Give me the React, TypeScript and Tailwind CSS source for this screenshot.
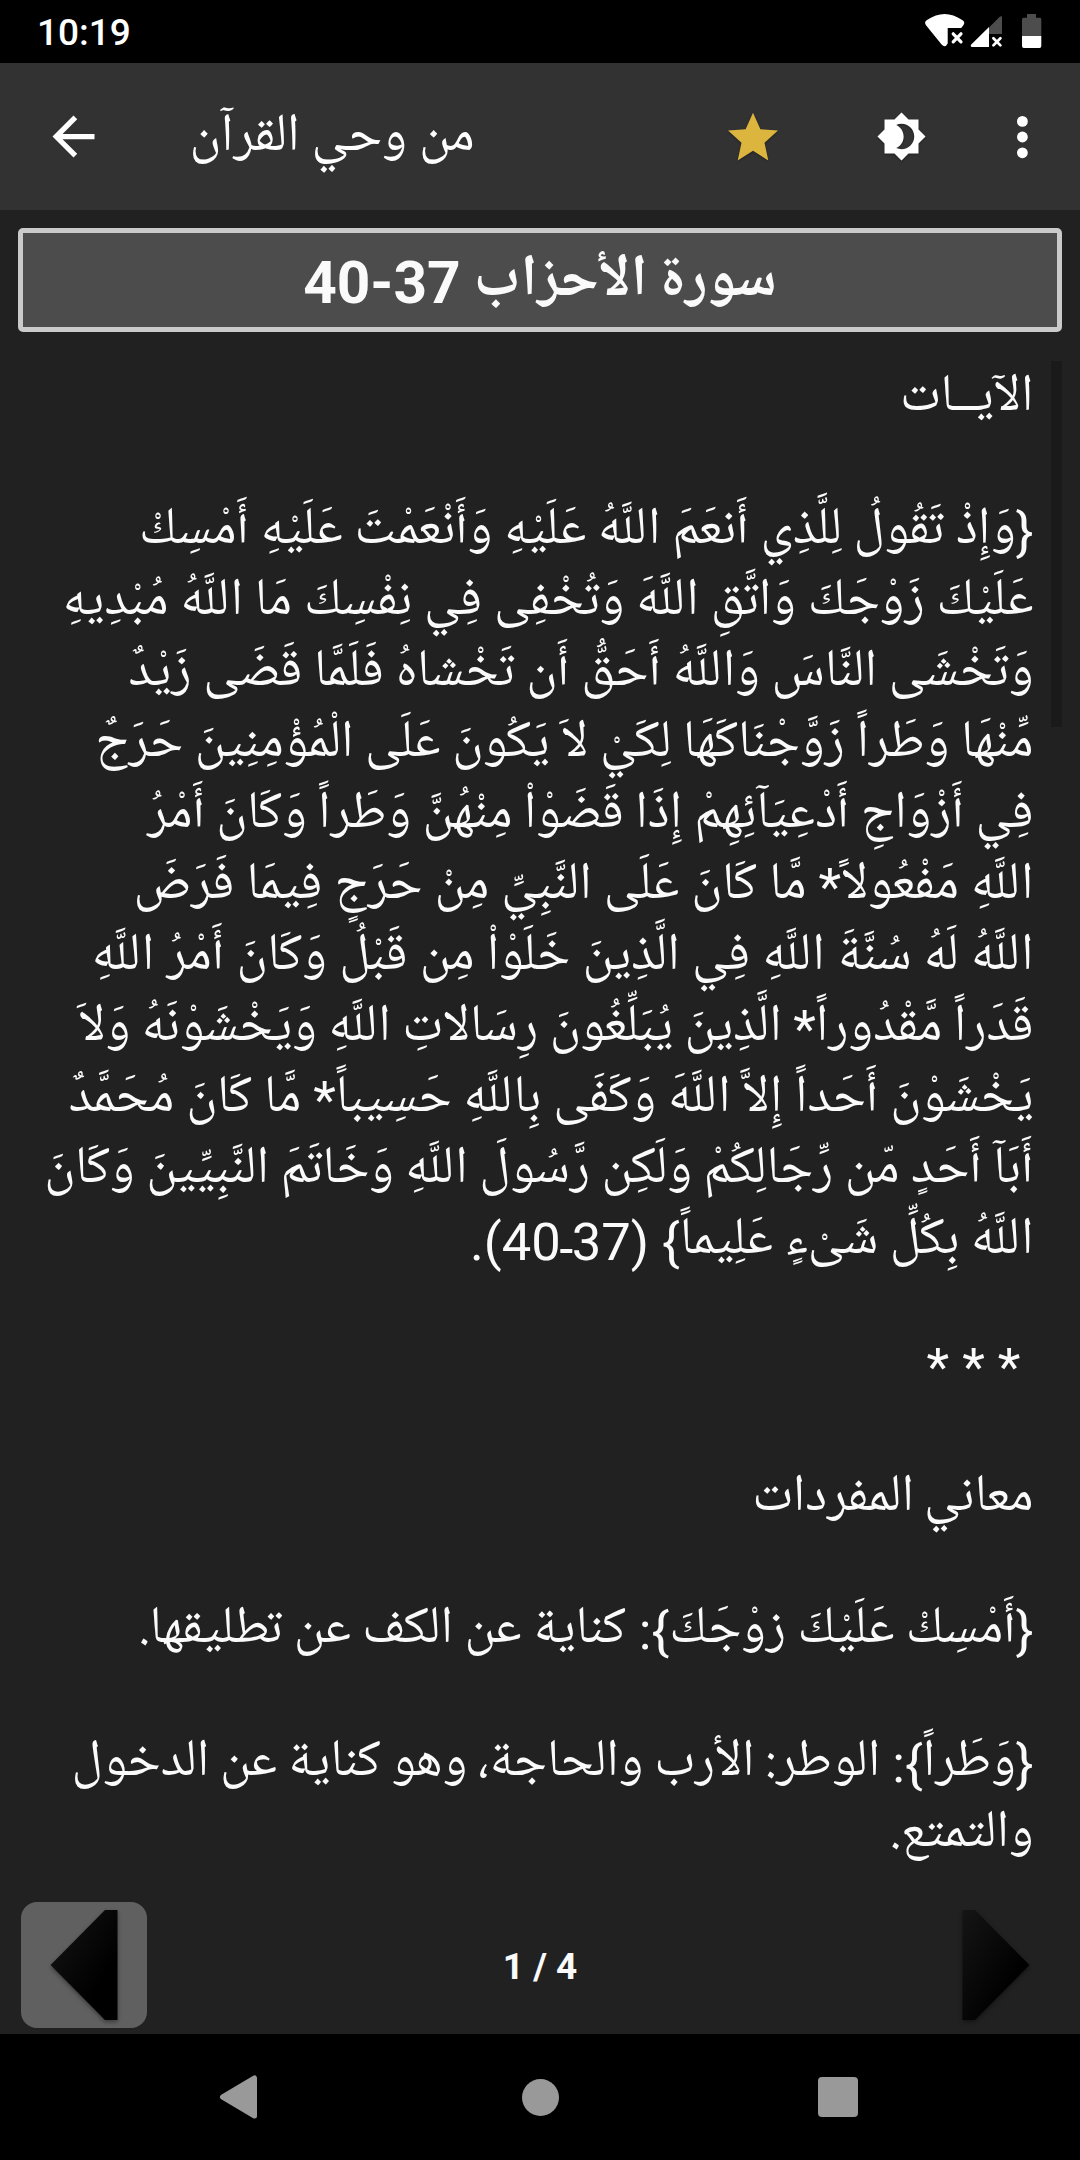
import type { ReactNode } from 'react';

const R = ({ children }: { children: ReactNode }) => (
  <span className="font-['Roboto']">{children}</span>
);

const Line = ({ children, space = 0 }: { children: ReactNode; space?: number }) => (
  <div className="h-[71px] whitespace-nowrap leading-[71px]" style={{ wordSpacing: `${space}px` }}>
    {children}
  </div>
);

const Blank = () => <div className="h-[61.5px]" />;

function StatusBar() {
  return (
    <div className="flex h-[63px] items-start justify-between bg-black pl-[37px] pr-[38px] text-white">
      <span className="pt-[11px] font-['Roboto'] text-[37px] font-medium leading-[43px]">10:19</span>
      <svg className="mt-[10px] h-[40px] w-[120px]" viewBox="922 10 120 40">
        <path d="M926.2 25.5Q923.6 22 927 20Q944.6 8 962.2 20Q965.8 22 963.2 25.5L961.2 28H947.7V43.5Q945 48.6 941.6 44.5Z" fill="#fff" />
        <path d="M953.2 33.8L961 41.8M961 33.8L953.2 41.8" stroke="#fff" strokeWidth="3.2" strokeLinecap="round" />
        <path d="M989 27.5L1000 16.6Q1002 15.6 1002 17.5V34H989Z" fill="#4d4d4d" />
        <path d="M989 27V47H971.6Q970 46.2 971 44.8Z" fill="#fff" />
        <path d="M993.4 38.2L1000.4 45.4M1000.4 38.2L993.4 45.4" stroke="#fff" strokeWidth="2.7" strokeLinecap="round" />
        <path d="M1027 14H1036V17.8H1040Q1041.3 17.8 1041.3 19.5V36H1022V19.5Q1022 17.8 1023.5 17.8H1027Z" fill="#4d4d4d" />
        <path d="M1022 36H1041.3V46Q1041.3 48 1039.5 48H1023.8Q1022 48 1022 46Z" fill="#fff" />
      </svg>
    </div>
  );
}

function Toolbar() {
  return (
    <div className="flex h-[147px] items-center bg-[#323232]">
      <svg className="ml-[42px] h-[63px] w-[63px]" viewBox="0 0 24 24" fill="#fff">
        <path d="M20 11H7.83l5.59-5.59L12 4l-8 8 8 8 1.41-1.41L7.83 13H20v-2z" />
      </svg>
      <div dir="rtl" className="-mt-px ml-[84.5px] w-[285px] whitespace-nowrap text-right text-[53.4px] leading-[71px] text-white">
        من وحي القرآن
      </div>
      <svg className="ml-auto h-[60px] w-[60px] drop-shadow-[0_1px_1px_rgba(0,0,0,0.35)]" viewBox="723 106.5 60 60">
        <path d="M753 112.3L760.4 128.7L778 130L764.5 142.3L768.3 160L753 150.3L737.7 160L741.5 142.3L728 130L745.6 128.7Z" fill="#dcb53f" />
      </svg>
      <svg className="ml-[93px] h-[51px] w-[51px] drop-shadow-[0_1px_1px_rgba(0,0,0,0.35)]" viewBox="0 0 24 24" fill="#fff">
        <path d="M20 8.69V4h-4.69L12 .69 8.69 4H4v4.69L.69 12 4 15.31V20h4.69L12 23.31 15.31 20H20v-4.69L23.31 12 20 8.69zM12 18c-.89 0-1.74-.2-2.5-.55C11.56 16.5 13 14.42 13 12s-1.44-4.5-3.5-5.45C10.26 6.2 11.11 6 12 6c3.31 0 6 2.69 6 6s-2.69 6-6 6z" />
      </svg>
      <svg className="ml-[86px] mr-[47px] h-[44px] w-[20px]" viewBox="0 0 20 44" fill="#fff">
        <circle cx="9.4" cy="6.4" r="5.4" />
        <circle cx="9.4" cy="22" r="5.4" />
        <circle cx="9.4" cy="37.8" r="5.4" />
      </svg>
    </div>
  );
}

function Article() {
  return (
    <div dir="rtl" className="flex h-[1541px] text-[52.5px]">
      <div className="ml-[3px] mr-[18px] h-[366px] w-[11px] shrink-0 bg-[#1a1a1a]" />
      <div className="mr-[14.5px] flex-1">
        <Line>الآيــات</Line>
        <Blank />
        <Line space={0.2}><R>{'{'}</R>وَإِذْ تَقُولُ لِلَّذِي أَنعَمَ اللَّهُ عَلَيْهِ وَأَنْعَمْتَ عَلَيْهِ أَمْسِكْ</Line>
        <Line space={0.3}>عَلَيْكَ زَوْجَكَ وَاتَّقِ اللَّهَ وَتُخْفِى فِي نِفْسِكَ مَا اللَّهُ مُبْدِيهِ</Line>
        <Line space={0.15}>وَتَخْشَى النَّاسَ وَاللَّهُ أَحَقُّ أَن تَخْشاهُ فَلَمَّا قَضَى زَيْدٌ</Line>
        <Line>مِّنْهَا وَطَراً زَوَّجْنَاكَهَا لِكَيْ لاَ يَكُونَ عَلَى الْمُؤْمِنِينَ حَرَجٌ</Line>
        <Line space={-0.2}>فِي أَزْوَاجِ أَدْعِيَآئِهِمْ إِذَا قَضَوْاْ مِنْهُنَّ وَطَراً وَكَانَ أَمْرُ</Line>
        <Line space={0.5}>اللَّهِ مَفْعُولاً<R>*</R> مَّا كَانَ عَلَى النَّبِيِّ مِنْ حَرَجٍ فِيمَا فَرَضَ</Line>
        <Line space={0.7}>اللَّهُ لَهُ سُنَّةَ اللَّهِ فِي الَّذِينَ خَلَوْاْ مِن قَبْلُ وَكَانَ أَمْرُ اللَّهِ</Line>
        <Line space={-0.1}>قَدَراً مَّقْدُوراً<R>*</R> الَّذِينَ يُبَلِّغُونَ رِسَالاتِ اللَّهِ وَيَخْشَوْنَهُ وَلاَ</Line>
        <Line space={0.4}>يَخْشَوْنَ أَحَداً إِلاَّ اللَّهَ وَكَفَى بِاللَّهِ حَسِيباً<R>*</R> مَّا كَانَ مُحَمَّدٌ</Line>
        <Line space={-0.1}>أَبَآ أَحَدٍ مّن رِّجَالِكُمْ وَلَكِن رَّسُولَ اللَّهِ وَخَاتَمَ النَّبِيِّينَ وَكَانَ</Line>
        <Line>اللَّهُ بِكُلِّ شَىْءٍ عَلِيماً<R>{'} (37'}</R>ـ<R>40).</R></Line>
        <div className="h-[62.5px]" />
        <div className="h-[61.5px] whitespace-pre font-['Roboto'] leading-[61.5px]"> * * *</div>
        <div className="h-[62px]" />
        <Line space={-1.5}>معاني المفردات</Line>
        <Blank />
        <Line space={-0.2}><R>{'{'}</R>أَمْسِكْ عَلَيْكَ زوْجَكَ<R>{'}: '}</R>كناية عن الكف عن تطليقها.</Line>
        <Blank />
        <Line space={-0.9}><R>{'{'}</R>وَطَراً<R>{'}: '}</R>الوطر: الأرب والحاجة، وهو كناية عن الدخول</Line>
        <Line>والتمتع.</Line>
      </div>
    </div>
  );
}

function Pager() {
  return (
    <div className="flex h-[132px] items-start justify-between px-[21px]">
      <div className="h-[126px] w-[126px] rounded-[16px] bg-[#606060]">
        <svg className="h-[126px] w-[126px] drop-shadow-[0_2px_2px_rgba(0,0,0,0.4)]" viewBox="0 0 126 126">
          <defs>
            <linearGradient id="prev" x1="0" y1="0" x2="1" y2="1">
              <stop offset="0" stopColor="#151515" />
              <stop offset="0.7" stopColor="#000" />
            </linearGradient>
          </defs>
          <path d="M29.6 63L84 8H96.5V118H84Z" fill="url(#prev)" />
        </svg>
      </div>
      <span className="mt-[43px] font-['Roboto'] text-[37px] font-bold leading-[43px]">1 / 4</span>
      <svg className="h-[126px] w-[126px] drop-shadow-[0_2px_2px_rgba(0,0,0,0.4)]" viewBox="0 0 126 126">
        <defs>
          <linearGradient id="next" x1="0" y1="0" x2="1" y2="1">
            <stop offset="0" stopColor="#151515" />
            <stop offset="0.7" stopColor="#000" />
          </linearGradient>
        </defs>
        <path d="M96.4 63L42 8H29.5V118H42Z" fill="url(#next)" />
      </svg>
    </div>
  );
}

function NavBar() {
  return (
    <div className="h-[126px] bg-black">
      <svg className="h-[126px] w-[1080px]" viewBox="0 2034 1080 126" fill="#999">
        <path d="M222.5 2097L254.5 2078V2116Z" stroke="#999" strokeWidth="5" strokeLinejoin="round" />
        <circle cx="540.5" cy="2097.5" r="18.5" />
        <rect x="818" y="2077" width="40" height="40" rx="4" />
      </svg>
    </div>
  );
}

export default function App() {
  return (
    <div className="flex h-[2160px] w-[1080px] flex-col overflow-hidden bg-[#212121] font-['Noto_Naskh_Arabic_UI','Roboto',sans-serif] text-[#fafafa]">
      <StatusBar />
      <Toolbar />
      <div className="mx-[18px] mb-[29px] mt-[18px] flex h-[104px] items-center justify-center rounded-[5px] border-[5px] border-[#cacaca] bg-[#4c4c4c]">
        <div dir="rtl" className="whitespace-pre pt-[3px] text-[58.6px] font-bold leading-[90px]">سورة الأحزاب <R>37-40</R></div>
      </div>
      <Article />
      <Pager />
      <NavBar />
    </div>
  );
}
